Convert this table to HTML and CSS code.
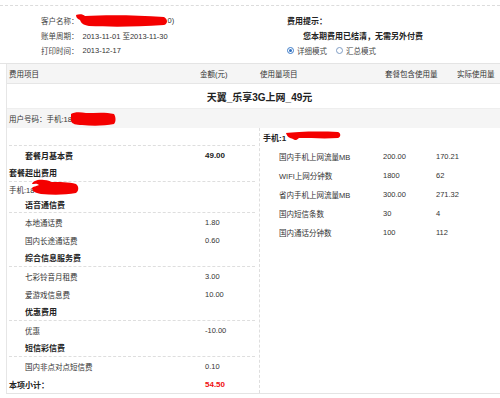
FILE: index.html
```html
<!DOCTYPE html>
<html lang="zh-CN">
<head>
<meta charset="utf-8">
<title>账单</title>
<link rel="stylesheet" href="styles.css">
</head>
<body>
<div class="summary">
  <div class="sum-left">
    <div class="sum-line"><span class="lbl">客户名称：</span><svg class="scr scr-name" width="93" height="13" viewBox="0 0 93 13"><path d="M1 1 C4 0 8 0 10 2 C30 1 60 1 89 3 C93 5 93 10 89 11 C60 13 35 13 14 12 C8 11 6 9 5 6 C3 5 1 4 1 1 Z"/></svg><span class="val">0)</span></div>
    <div class="sum-line"><span class="lbl">账单周期：</span><span class="val">2013-11-01 至2013-11-30</span></div>
    <div class="sum-line"><span class="lbl">打印时间：</span><span class="val">2013-12-17</span></div>
  </div>
  <div class="sum-right">
    <div class="sum-line b">费用提示：</div>
    <div class="sum-line b tip-msg">您本期费用已结清，无需另外付费</div>
    <div class="sum-line modes"><span class="radio on"></span><span class="mode">详细模式</span><span class="radio"></span><span class="mode">汇总模式</span></div>
  </div>
</div>

<div class="bill">
  <div class="thead">
    <div class="th first">费用项目</div>
    <div class="th">金额(元)</div>
    <div class="th">使用量项目</div>
    <div class="th">套餐包含使用量</div>
    <div class="th">实际使用量</div>
  </div>
  <div class="title-row">天翼_乐享3G上网_49元</div>
  <div class="user-row">用户号码：手机:18<svg class="scr scr-user" width="46" height="14" viewBox="0 0 46 14"><path d="M1 2 C4 0 10 0 16 1 C26 1 36 0 44 2 C46 5 46 10 44 12 C34 14 22 14 12 13 C6 13 2 12 1 9 Z"/></svg></div>

  <div class="body">
    <div class="fees">
      <div class="row sub h18"></div>
      <div class="row h18"><span class="name ind b">套餐月基本费</span><span class="amt b">49.00</span></div>
      <div class="row sub h18"><span class="name b">套餐超出费用</span></div>
      <div class="row h14"><span class="name">手机:18<svg class="scr scr-phone" width="50" height="16" viewBox="0 0 50 16"><path d="M3 5 C4 2 9 0 15 1 C19 1 21 2 22 3 C30 3 40 3 47 5 C50 7 50 12 47 14 C36 16 24 16 12 15 C6 14 3 12 3 9 C5 7 9 7 10 6 C8 4 5 5 3 5 Z"/></svg></span></div>
      <div class="row sub h17"><span class="name ind b">语音通信费</span></div>
      <div class="row h18"><span class="name ind">本地通话费</span><span class="amt">1.80</span></div>
      <div class="row h18"><span class="name ind">国内长途通话费</span><span class="amt">0.60</span></div>
      <div class="row sub h18"><span class="name ind b">综合信息服务费</span></div>
      <div class="row h18"><span class="name ind">七彩铃音月租费</span><span class="amt">3.00</span></div>
      <div class="row h18"><span class="name ind">爱游戏信息费</span><span class="amt">10.00</span></div>
      <div class="row sub h18"><span class="name ind b">优惠费用</span></div>
      <div class="row h18"><span class="name ind">优惠</span><span class="amt">-10.00</span></div>
      <div class="row sub h18"><span class="name ind b">短信彩信费</span></div>
      <div class="row h18"><span class="name ind">国内非点对点短信费</span><span class="amt">0.10</span></div>
      <div class="row h18"><span class="name b">本项小计：</span><span class="amt b red">54.50</span></div>
    </div>
    <div class="usage">
      <div class="urow uhead b">手机:1<svg class="scr scr-right" width="56" height="10" viewBox="0 0 56 10"><path d="M1 2 C10 1 30 0 53 1 C56 2 56 6 53 7 C40 8 25 7 14 7 C12 9 10 10 8 8 C5 7 2 6 1 2 Z"/></svg></div>
      <div class="urow"><span class="uname">国内手机上网流量MB</span><span class="uv">200.00</span><span class="uv">170.21</span></div>
      <div class="urow"><span class="uname">WIFI上网分钟数</span><span class="uv">1800</span><span class="uv">62</span></div>
      <div class="urow"><span class="uname">省内手机上网流量MB</span><span class="uv">300.00</span><span class="uv">271.32</span></div>
      <div class="urow"><span class="uname">国内短信条数</span><span class="uv">30</span><span class="uv">4</span></div>
      <div class="urow"><span class="uname">国内通话分钟数</span><span class="uv">100</span><span class="uv">112</span></div>
    </div>
  </div>
</div>
</body>
</html>
```
FILE: styles.css
```css
* { box-sizing: border-box; }
html, body { margin: 0; padding: 0; background: #fff; }
body {
  width: 500px;
  height: 398px;
  overflow: hidden;
  font-family: "Liberation Sans", Arial, "Noto Sans CJK SC", sans-serif;
  font-size: 7.5px;
  color: #333;
}
.b { font-weight: bold; font-size: 8px; color: #222; }
.red { color: #f01010; }
.scr { fill: #f40000; display: inline-block; vertical-align: middle; flex: none; }

/* summary */
.summary {
  margin-top: 5px;
  height: 59px;
  border-top: 1px dashed #dcdcdc;
  border-bottom: 1px solid #e4e4e4;
  padding-top: 7px;
  display: flex;
}
.sum-left { width: 287px; padding-left: 41px; }
.sum-right { flex: 1; }
.sum-line {
  height: 15px;
  display: flex;
  align-items: center;
  white-space: nowrap;
}
.lbl { color: #444; }
.val { margin-left: 4px; }
.scr-name { margin-left: -4px; margin-top: -1px; }
.scr-name + .val { margin-left: 0; }
.tip-msg { padding-left: 16px; }
.radio {
  width: 7px;
  height: 7px;
  border-radius: 50%;
  border: 1px solid #7f9dc4;
  background: #fff;
  display: inline-flex;
  align-items: center;
  justify-content: center;
  margin-right: 3px;
}
.radio.on { border-color: #3d7cc9; }
.radio.on::after {
  content: "";
  width: 3px;
  height: 3px;
  border-radius: 50%;
  background: #2f6fc0;
}
.mode { margin-right: 9px; color: #444; }

/* bill table */
.bill {
  margin-left: 6px;
  border-left: 1px solid #e6e6e6;
  border-bottom: 1px solid #e4e4e4;
}
.thead {
  height: 20px;
  background: #f5f5f5;
  border-bottom: 1px solid #e6e6e6;
  display: grid;
  grid-template-columns: 193px 60px 125px 72px 1fr;
  align-items: center;
}
.th { white-space: nowrap; color: #333; }
.th.first { padding-left: 2px; }
.title-row {
  height: 24px;
  display: flex;
  align-items: center;
  justify-content: center;
  padding-left: 12px;
  font-weight: bold;
  font-size: 10px;
  color: #222;
}
.user-row {
  height: 20px;
  background: #f5f5f5;
  border-top: 1px solid #eeeeee;
  display: flex;
  align-items: center;
  padding-left: 2px;
  white-space: nowrap;
}
.scr-user { margin-left: -2px; }

.body { display: flex; }
.fees { width: 252px; padding-left: 2px; padding-right: 4px; }
.row {
  display: grid;
  grid-template-columns: 196px 1fr;
  align-items: center;
  white-space: nowrap;
}
.row.sub { border-bottom: 1px dashed #dedede; }
.h18 { height: 18px; }
.h17 { height: 17px; }
.h14 { height: 14px; }
.name { display: flex; align-items: center; }
.name.ind { padding-left: 16px; }
.scr-phone { margin-left: -5px; margin-top: -4px; }

.usage { flex: 1; border-left: 1px dashed #dedede; }
.urow {
  height: 19px;
  display: grid;
  grid-template-columns: 123px 53px 1fr;
  align-items: center;
  white-space: nowrap;
}
.uname { padding-left: 19px; }
.uhead { display: flex; padding-left: 3px; }
.scr-right { margin-left: -1px; margin-top: -3px; }
```
